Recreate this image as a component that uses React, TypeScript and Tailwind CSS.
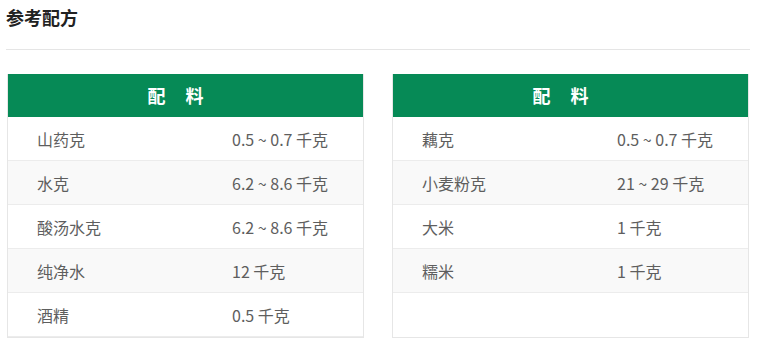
import React from 'react';

type Row = { name: string; amount: string };

const leftRows: Row[] = [
  { name: '山药克', amount: '0.5 ~ 0.7 千克' },
  { name: '水克', amount: '6.2 ~ 8.6 千克' },
  { name: '酸汤水克', amount: '6.2 ~ 8.6 千克' },
  { name: '纯净水', amount: '12 千克' },
  { name: '酒精', amount: '0.5 千克' },
];

const rightRows: Row[] = [
  { name: '藕克', amount: '0.5 ~ 0.7 千克' },
  { name: '小麦粉克', amount: '21 ~ 29 千克' },
  { name: '大米', amount: '1 千克' },
  { name: '糯米', amount: '1 千克' },
];

const RecipeTable = ({ rows }: { rows: Row[] }) => (
  <div className="flex-1 flex flex-col border border-t-0 border-[#e6e6e6] bg-white">
    <div className="h-[43px] bg-[#068a56] flex items-center justify-center text-white text-[18px] font-bold tracking-[20px]">
      配料
    </div>
    {rows.map((row, i) => (
      <div
        key={row.name}
        className={`grid grid-cols-[195px_1fr] h-[44px] items-center border-b border-[#ececec] text-[16px] text-[#5e5e5e] ${
          i % 2 === 1 ? 'bg-[#f9f9f9]' : 'bg-white'
        }`}
      >
        <span className="pl-[29px]">{row.name}</span>
        <span className="pl-[29px]">{row.amount}</span>
      </div>
    ))}
  </div>
);

export default function App() {
  return (
    <div
      className="w-[758px] h-[347px] bg-white pl-[6px] pr-[8px] pt-[5px]"
      style={{ fontFamily: '"Noto Sans CJK SC", sans-serif' }}
    >
      <h2 className="text-[18px] leading-[24px] font-bold text-[#222]">参考配方</h2>
      <div className="mt-[20px] h-px bg-[#e5e5e5]" />
      <div className="mt-[24px] pl-px pr-px flex gap-[28px] h-[264px]">
        <RecipeTable rows={leftRows} />
        <RecipeTable rows={rightRows} />
      </div>
    </div>
  );
}
